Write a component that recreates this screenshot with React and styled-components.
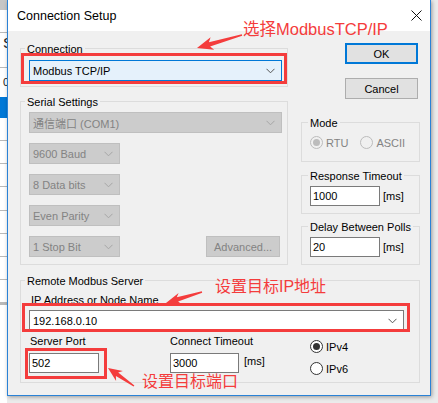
import React from 'react';
import styled, { createGlobalStyle } from 'styled-components';

const GlobalStyle = createGlobalStyle`
  html, body {
    margin: 0;
    padding: 0;
  }
  body {
    width: 438px;
    height: 403px;
    overflow: hidden;
    background: #e9e9e9;
    font-family: 'Liberation Sans', 'Noto Sans CJK SC', Arial, sans-serif;
    font-size: 11px;
    color: #000;
  }
`;

const RED = '#f43c3c';

const Screen = styled.div`
  position: relative;
  width: 438px;
  height: 403px;
  display: flex;
  align-items: flex-start;
  overflow: hidden;
  background: #ebebeb;
`;

const LeftStrip = styled.div`
  width: 7px;
  height: 403px;
  display: flex;
  flex-direction: column;
  flex-shrink: 0;
  background: #fff;
  overflow: hidden;
`;

const StripRow = styled.div`
  height: ${p => p.$h}px;
  flex-shrink: 0;
  box-sizing: border-box;
  background: ${p => p.$bg || '#fff'};
  border-bottom: ${p => (p.$line ? '1px solid #b9b9b9' : 'none')};
  font-size: ${p => p.$fs || 11}px;
  line-height: ${p => p.$lh || p.$h}px;
  padding-left: 3px;
  white-space: nowrap;
  color: #222;
`;

const Dialog = styled.div`
  width: 424px;
  height: 396px;
  flex-shrink: 0;
  box-sizing: border-box;
  border: 1px solid #2a82d6;
  border-top: none;
  display: flex;
  flex-direction: column;
  background: #f0f0f0;
  box-shadow: 1px 1px 4px rgba(0, 0, 0, 0.35);
`;

const TitleBar = styled.div`
  height: 31px;
  flex-shrink: 0;
  display: flex;
  align-items: center;
  justify-content: space-between;
  padding: 0 8px 0 9px;
  background: #fff;
  font-size: 12.5px;
`;

const Body = styled.div`
  display: flex;
  flex-direction: column;
  padding: 0 10px 0 12px;
`;

const TopArea = styled.div`
  display: flex;
  gap: 13px;
`;

const Column = styled.div`
  width: ${p => p.$w}px;
  display: flex;
  flex-direction: column;
`;

const Group = styled.div`
  position: relative;
  box-sizing: border-box;
  width: ${p => (p.$w ? `${p.$w}px` : 'auto')};
  height: ${p => p.$h}px;
  margin-top: ${p => p.$mt || 0}px;
  border: 1px solid #dcdcdc;
  padding: ${p => p.$pt || 10}px 6px 0 8px;
  display: flex;
  flex-direction: column;
`;

const Legend = styled.div`
  position: absolute;
  top: -6px;
  left: ${p => p.$lx || 4}px;
  padding: 0 2px;
  line-height: 13px;
  background: #f0f0f0;
  white-space: nowrap;
`;

const ComboBox = styled.div`
  box-sizing: border-box;
  width: ${p => p.$w}px;
  height: 21px;
  margin-top: ${p => p.$mt || 0}px;
  display: flex;
  align-items: center;
  justify-content: space-between;
  padding: 0 6px 0 3px;
  border: 1px solid ${p => (p.$active ? '#0078d7' : p.$disabled ? '#bfbfbf' : '#7a7a7a')};
  background: ${p => (p.$active ? '#e5f1fb' : p.$disabled ? '#cccccc' : '#fff')};
  color: ${p => (p.$disabled ? '#838383' : '#000')};
  white-space: nowrap;
`;

const Chevron = ({ color }) => (
  <svg width="9" height="6" viewBox="0 0 9 6">
    <path d="M0.5 0.8 L4.5 4.8 L8.5 0.8" fill="none" stroke={color} strokeWidth="1" />
  </svg>
);

const Combo = ({ children, ...rest }) => (
  <ComboBox {...rest}>
    <span>{children}</span>
    <Chevron color={rest.$disabled ? '#a6a6a6' : '#555'} />
  </ComboBox>
);

const SerialRows = styled.div`
  display: flex;
  flex-direction: column;
  gap: 10px;
`;

const SplitRow = styled.div`
  display: flex;
  justify-content: space-between;
`;

const Button = styled.div`
  box-sizing: border-box;
  width: ${p => p.$w || 73}px;
  height: 21px;
  margin-top: ${p => p.$mt || 0}px;
  margin-right: ${p => p.$mr || 0}px;
  align-self: flex-end;
  display: flex;
  align-items: center;
  justify-content: center;
  border: ${p => (p.$primary ? '2px solid #0078d7' : p.$disabled ? '1px solid #bfbfbf' : '1px solid #adadad')};
  background: ${p => (p.$disabled ? '#cccccc' : '#e1e1e1')};
  color: ${p => (p.$disabled ? '#838383' : '#000')};
`;

const RadioRow = styled.div`
  display: flex;
  align-items: center;
  gap: ${p => p.$gap || 0}px;
`;

const RadioItem = styled.div`
  display: flex;
  align-items: center;
  gap: 3px;
  color: ${p => (p.$disabled ? '#838383' : '#000')};
`;

const Circle = styled.span`
  box-sizing: border-box;
  width: 13px;
  height: 13px;
  border-radius: 50%;
  border: 1px solid ${p => (p.$disabled ? '#bcbcbc' : '#333')};
  background: ${p => (p.$disabled ? '#f0f0f0' : '#fff')};
  display: flex;
  align-items: center;
  justify-content: center;
  &::after {
    content: '';
    display: ${p => (p.$checked ? 'block' : 'none')};
    width: 7px;
    height: 7px;
    border-radius: 50%;
    background: ${p => (p.$disabled ? '#bcbcbc' : '#333')};
  }
`;

const Radio = ({ label, checked, disabled }) => (
  <RadioItem $disabled={disabled}>
    <Circle $checked={checked} $disabled={disabled} />
    <span>{label}</span>
  </RadioItem>
);

const InputRow = styled.div`
  display: flex;
  align-items: center;
`;

const TextBox = styled.div`
  box-sizing: border-box;
  width: ${p => p.$w}px;
  height: 20px;
  margin-top: ${p => p.$mt || 0}px;
  border: 1px solid #7a7a7a;
  background: #fff;
  padding-left: 2px;
  display: flex;
  align-items: center;
`;

const Unit = styled.span`
  margin-left: ${p => p.$ml || 4}px;
`;

const FieldLabel = styled.div`
  line-height: 13px;
  padding-left: ${p => p.$pl || 0}px;
  white-space: nowrap;
`;

const BottomGrid = styled.div`
  display: grid;
  grid-template-columns: 141px 140px auto;
  margin-top: 4px;
`;

const Cell = styled.div`
  display: flex;
  flex-direction: column;
`;

const RadioStack = styled.div`
  display: flex;
  flex-direction: column;
  gap: 9px;
  padding-top: 5px;
`;

const Overlay = styled.svg`
  position: absolute;
  top: 0;
  left: 0;
  pointer-events: none;
`;

const MarkBox = styled.div`
  position: absolute;
  box-sizing: border-box;
  left: ${p => p.$x}px;
  top: ${p => p.$y}px;
  width: ${p => p.$w}px;
  height: ${p => p.$h}px;
  border: 3px solid ${RED};
  pointer-events: none;
`;

const Note = styled.span`
  position: absolute;
  left: ${p => p.$x}px;
  top: ${p => p.$y}px;
  font-size: ${p => p.$fs || 16}px;
  line-height: 20px;
  color: ${RED};
  white-space: nowrap;
  font-family: 'Liberation Sans', 'Noto Sans CJK SC', sans-serif;
`;

function arrowPoints(x1, y1, x2, y2, tailW, shaftW, headW, headL) {
  const dx = x2 - x1;
  const dy = y2 - y1;
  const len = Math.hypot(dx, dy);
  const ux = dx / len;
  const uy = dy / len;
  const nx = -uy;
  const ny = ux;
  const bx = x2 - ux * headL;
  const by = y2 - uy * headL;
  const jx = bx + ux * 3;
  const jy = by + uy * 3;
  const pts = [
    [x1 + (nx * tailW) / 2, y1 + (ny * tailW) / 2],
    [jx + (nx * shaftW) / 2, jy + (ny * shaftW) / 2],
    [bx + (nx * headW) / 2, by + (ny * headW) / 2],
    [x2, y2],
    [bx - (nx * headW) / 2, by - (ny * headW) / 2],
    [jx - (nx * shaftW) / 2, jy - (ny * shaftW) / 2],
    [x1 - (nx * tailW) / 2, y1 - (ny * tailW) / 2],
  ];
  return pts.map(p => p.map(v => v.toFixed(1)).join(',')).join(' ');
}

const arrows = [
  [242, 35, 197, 48, 1.5, 4.5, 13, 16],
  [202, 292, 166, 303, 1.5, 4.5, 12, 15],
  [134, 386, 108, 368, 1.5, 4, 12, 14],
];

// window behind the dialog, only a sliver is visible
const stripRows = [
  { h: 10, bg: '#c6c6c6' },
  { h: 23, line: true },
  { h: 35, line: true, t: 'S', fs: 15, lh: 20 },
  { h: 29, t: '0' },
  { h: 21, bg: '#0078d7' },
  { h: 23, line: true },
  { h: 23, line: true },
  { h: 23, line: true },
  { h: 24, line: true },
  { h: 23, line: true },
  { h: 23, line: true },
  { h: 23, line: true },
  { h: 22 },
  { h: 3, bg: '#b9b9b9' },
  { h: 112 },
  { h: 8, bg: '#d4d4d4' },
];

export default function App() {
  return (
    <>
      <GlobalStyle />
      <Screen>
        <LeftStrip>
          {stripRows.map((r, i) => (
            <StripRow key={i} $h={r.h} $bg={r.bg} $line={r.line} $fs={r.fs} $lh={r.lh}>
              {r.t}
            </StripRow>
          ))}
        </LeftStrip>

        <Dialog>
          <TitleBar>
            <span>Connection Setup</span>
            <svg width="11" height="11" viewBox="0 0 11 11">
              <path d="M0.5 0.5 L10.5 10.5 M10.5 0.5 L0.5 10.5" stroke="#111" strokeWidth="1" />
            </svg>
          </TitleBar>

          <Body>
            <TopArea>
              <Column $w={268}>
                <Group $h={39} $mt={17} $pt={11}>
                  <Legend>Connection</Legend>
                  <Combo $w={253} $active>Modbus TCP/IP</Combo>
                </Group>

                <Group $h={164} $mt={14}>
                  <Legend>Serial Settings</Legend>
                  <SerialRows>
                    <Combo $w={253} $disabled>通信端口 (COM1)</Combo>
                    <Combo $w={91} $disabled>9600 Baud</Combo>
                    <Combo $w={91} $disabled>8 Data bits</Combo>
                    <Combo $w={91} $disabled>Even Parity</Combo>
                    <SplitRow>
                      <Combo $w={91} $disabled>1 Stop Bit</Combo>
                      <Button $w={74} $mr={1} $disabled>Advanced...</Button>
                    </SplitRow>
                  </SerialRows>
                </Group>
              </Column>

              <Column $w={119}>
                <Button $primary $mt={12} $mr={2}>OK</Button>
                <Button $mt={14} $mr={2}>Cancel</Button>

                <Group $h={40} $mt={23} $pt={13}>
                  <Legend $lx={6}>Mode</Legend>
                  <RadioRow $gap={12}>
                    <Radio label="RTU" checked disabled />
                    <Radio label="ASCII" disabled />
                  </RadioRow>
                </Group>

                <Group $h={39} $mt={13}>
                  <Legend $lx={6}>Response Timeout</Legend>
                  <InputRow>
                    <TextBox $w={70}>1000</TextBox>
                    <Unit $ml={3}>[ms]</Unit>
                  </InputRow>
                </Group>

                <Group $h={39} $mt={12}>
                  <Legend $lx={6}>Delay Between Polls</Legend>
                  <InputRow>
                    <TextBox $w={70}>20</TextBox>
                    <Unit $ml={3}>[ms]</Unit>
                  </InputRow>
                </Group>
              </Column>
            </TopArea>

            <Group $w={400} $h={103} $mt={15} $pt={13}>
              <Legend>Remote Modbus Server</Legend>
              <FieldLabel $pl={2}>IP Address or Node Name</FieldLabel>
              <Combo $w={375} $mt={3}>192.168.0.10</Combo>
              <BottomGrid>
                <Cell>
                  <FieldLabel $pl={1}>Server Port</FieldLabel>
                  <TextBox $w={70} $mt={5}>502</TextBox>
                </Cell>
                <Cell>
                  <FieldLabel>Connect Timeout</FieldLabel>
                  <InputRow>
                    <TextBox $w={69} $mt={5}>3000</TextBox>
                    <Unit $ml={5}>[ms]</Unit>
                  </InputRow>
                </Cell>
                <RadioStack>
                  <Radio label="IPv4" checked />
                  <Radio label="IPv6" />
                </RadioStack>
              </BottomGrid>
            </Group>
          </Body>
        </Dialog>

        <MarkBox $x={21} $y={53} $w={266} $h={31} />
        <MarkBox $x={22} $y={303} $w={388} $h={29} />
        <MarkBox $x={25} $y={348} $w={82} $h={31} />

        <Overlay width="438" height="403" viewBox="0 0 438 403">
          {arrows.map((a, i) => (
            <polygon key={i} points={arrowPoints(...a)} fill={RED} />
          ))}
        </Overlay>

        <Note $x={243} $y={19} $fs={16.5}>选择ModbusTCP/IP</Note>
        <Note $x={215} $y={277}>设置目标IP地址</Note>
        <Note $x={142} $y={372}>设置目标端口</Note>
      </Screen>
    </>
  );
}
